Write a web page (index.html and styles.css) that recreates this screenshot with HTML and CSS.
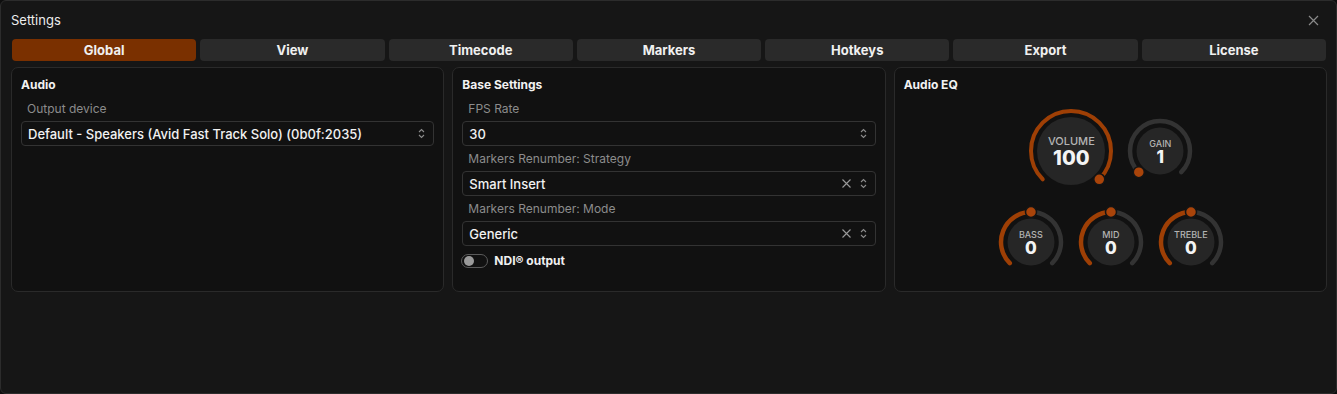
FILE: index.html
```html
<!DOCTYPE html>
<html lang="en">

<head>
    <meta charset="UTF-8">
    <meta name="viewport" content="width=device-width, initial-scale=1.0">
    <title>Settings</title>

    <link rel="stylesheet" href="styles.css">

</head>

<body>

    <div class="janela">
        <header class="topo">
            <span class="titulo">Settings</span>
            <svg class="fechar" width="11" height="11" viewBox="0 0 11 11">
                <path d="M1 1 L10 10 M10 1 L1 10" stroke="#8a8a8a" stroke-width="1.2" fill="none" />
            </svg>
        </header>

        <nav class="abas">
            <button class="aba ativa">Global</button>
            <button class="aba">View</button>
            <button class="aba">Timecode</button>
            <button class="aba">Markers</button>
            <button class="aba">Hotkeys</button>
            <button class="aba">Export</button>
            <button class="aba">License</button>
        </nav>

        <section class="paineis">
            <div class="painel">
                <h3>Audio</h3>
                <label class="rotulo">Output device</label>
                <div class="seletor">
                    <span>Default - Speakers (Avid Fast Track Solo) (0b0f:2035)</span>
                    <svg class="setas" width="7" height="11" viewBox="0 0 7 11">
                        <path d="M1 4 L3.5 1.5 L6 4 M1 7 L3.5 9.5 L6 7" stroke="#8c8c8c" stroke-width="1.1" fill="none" />
                    </svg>
                </div>
            </div>

            <div class="painel">
                <h3>Base Settings</h3>
                <label class="rotulo">FPS Rate</label>
                <div class="seletor">
                    <span>30</span>
                    <svg class="setas" width="7" height="11" viewBox="0 0 7 11">
                        <path d="M1 4 L3.5 1.5 L6 4 M1 7 L3.5 9.5 L6 7" stroke="#8c8c8c" stroke-width="1.1" fill="none" />
                    </svg>
                </div>
                <label class="rotulo">Markers Renumber: Strategy</label>
                <div class="seletor">
                    <span>Smart Insert</span>
                    <svg class="limpar" width="9" height="9" viewBox="0 0 9 9">
                        <path d="M0.5 0.5 L8.5 8.5 M8.5 0.5 L0.5 8.5" stroke="#9a9a9a" stroke-width="1.1" fill="none" />
                    </svg>
                    <svg class="setas" width="7" height="11" viewBox="0 0 7 11">
                        <path d="M1 4 L3.5 1.5 L6 4 M1 7 L3.5 9.5 L6 7" stroke="#8c8c8c" stroke-width="1.1" fill="none" />
                    </svg>
                </div>
                <label class="rotulo">Markers Renumber: Mode</label>
                <div class="seletor">
                    <span>Generic</span>
                    <svg class="limpar" width="9" height="9" viewBox="0 0 9 9">
                        <path d="M0.5 0.5 L8.5 8.5 M8.5 0.5 L0.5 8.5" stroke="#9a9a9a" stroke-width="1.1" fill="none" />
                    </svg>
                    <svg class="setas" width="7" height="11" viewBox="0 0 7 11">
                        <path d="M1 4 L3.5 1.5 L6 4 M1 7 L3.5 9.5 L6 7" stroke="#8c8c8c" stroke-width="1.1" fill="none" />
                    </svg>
                </div>
                <div class="chave">
                    <span class="trilho"><span class="bolinha"></span></span>
                    <span>NDI® output</span>
                </div>
            </div>

            <div class="painel">
                <h3>Audio EQ</h3>
                <div class="knobs">
                    <div class="linha">
                        <div class="knob grande">
                            <svg width="88" height="88" viewBox="0 0 88 88">
                                <path d="M15.72 72.28 A40 40 0 1 1 72.28 72.28" stroke="#9e3f05" stroke-width="4" fill="none" stroke-linecap="round" />
                                <circle cx="44" cy="44" r="34" fill="#262626" />
                                <circle cx="72.28" cy="72.28" r="5.5" fill="#a9440a" stroke="#141414" stroke-width="1.5" />
                            </svg>
                            <div class="valor">
                                <span class="nome">VOLUME</span>
                                <span class="num">100</span>
                            </div>
                        </div>
                        <div class="knob">
                            <svg width="68" height="68" viewBox="0 0 68 68">
                                <path d="M12.79 55.21 A30 30 0 1 1 55.21 55.21" stroke="#333333" stroke-width="4.5" fill="none" stroke-linecap="round" />
                                <circle cx="34" cy="34" r="23.5" fill="#262626" />
                                <circle cx="12.79" cy="55.21" r="5.5" fill="#a9440a" stroke="#141414" stroke-width="1.5" />
                            </svg>
                            <div class="valor">
                                <span class="nome">GAIN</span>
                                <span class="num">1</span>
                            </div>
                        </div>
                    </div>
                    <div class="linha baixo">
                        <div class="knob">
                            <svg width="68" height="68" viewBox="0 0 68 68">
                                <path d="M34 4 A30 30 0 0 1 55.21 55.21" stroke="#333333" stroke-width="4.5" fill="none" stroke-linecap="round" />
                                <path d="M12.79 55.21 A30 30 0 0 1 34 4" stroke="#9e3f05" stroke-width="4.5" fill="none" stroke-linecap="round" />
                                <circle cx="34" cy="34" r="23.5" fill="#262626" />
                                <circle cx="34" cy="4" r="5.5" fill="#a9440a" stroke="#141414" stroke-width="1.5" />
                            </svg>
                            <div class="valor">
                                <span class="nome">BASS</span>
                                <span class="num">0</span>
                            </div>
                        </div>
                        <div class="knob">
                            <svg width="68" height="68" viewBox="0 0 68 68">
                                <path d="M34 4 A30 30 0 0 1 55.21 55.21" stroke="#333333" stroke-width="4.5" fill="none" stroke-linecap="round" />
                                <path d="M12.79 55.21 A30 30 0 0 1 34 4" stroke="#9e3f05" stroke-width="4.5" fill="none" stroke-linecap="round" />
                                <circle cx="34" cy="34" r="23.5" fill="#262626" />
                                <circle cx="34" cy="4" r="5.5" fill="#a9440a" stroke="#141414" stroke-width="1.5" />
                            </svg>
                            <div class="valor">
                                <span class="nome">MID</span>
                                <span class="num">0</span>
                            </div>
                        </div>
                        <div class="knob">
                            <svg width="68" height="68" viewBox="0 0 68 68">
                                <path d="M34 4 A30 30 0 0 1 55.21 55.21" stroke="#333333" stroke-width="4.5" fill="none" stroke-linecap="round" />
                                <path d="M12.79 55.21 A30 30 0 0 1 34 4" stroke="#9e3f05" stroke-width="4.5" fill="none" stroke-linecap="round" />
                                <circle cx="34" cy="34" r="23.5" fill="#262626" />
                                <circle cx="34" cy="4" r="5.5" fill="#a9440a" stroke="#141414" stroke-width="1.5" />
                            </svg>
                            <div class="valor">
                                <span class="nome">TREBLE</span>
                                <span class="num">0</span>
                            </div>
                        </div>
                    </div>
                </div>
            </div>
        </section>
    </div>

</body>

</html>
```

FILE: styles.css
```css
* {
    box-sizing: border-box;
}

html,
body {
    margin: 0;
    height: 100%;
    background: #0e0e0e;
}

body {
    font-family: Inter, "Noto Sans", sans-serif;
    color: #f0f0f0;
}

.janela {
    height: 394px;
    width: 1337px;
    background: #161616;
    border: 1px solid #2c2c2c;
    border-radius: 6px;
    padding: 0 9px 0 10px;
}

.topo {
    height: 38px;
    display: flex;
    align-items: center;
    justify-content: space-between;
}

.titulo {
    font-size: 13px;
    color: #ececec;
}

.fechar {
    margin-right: 8px;
}

.abas {
    display: grid;
    grid-template-columns: repeat(7, 1fr);
    gap: 4px;
    padding: 0 1px;
}

.aba {
    height: 22px;
    border: none;
    border-radius: 4px;
    background: #2a2a2a;
    color: #f0f0f0;
    font-family: Inter, sans-serif;
    font-size: 13px;
    font-weight: 700;
    padding: 0;
}

.aba.ativa {
    background: #7a3000;
}

.paineis {
    display: grid;
    grid-template-columns: repeat(3, 1fr);
    gap: 8px;
    margin-top: 6px;
}

.painel {
    height: 225px;
    background: #111111;
    border: 1px solid #2a2a2a;
    border-radius: 7px;
    padding: 7px 9px 0 9px;
    display: flex;
    flex-direction: column;
}

.painel h3 {
    margin: 0 0 1px 0;
    font-size: 12px;
    font-weight: 700;
    line-height: 20px;
    color: #f2f2f2;
}

.rotulo {
    display: block;
    font-size: 12px;
    line-height: 16px;
    color: #8c8c8c;
    padding: 5px 0 4px 6px;
}

.seletor {
    height: 25px;
    border: 1px solid #333333;
    border-radius: 4px;
    display: flex;
    align-items: center;
    padding: 0 8px 0 6px;
    font-size: 13px;
    font-weight: 500;
    color: #f2f2f2;
}

.seletor span {
    flex: 1;
}

.limpar {
    margin-right: 9px;
}

.chave {
    display: flex;
    align-items: center;
    gap: 6px;
    margin-top: 7px;
    margin-left: -1px;
    font-size: 12px;
    font-weight: 700;
}

.trilho {
    width: 27px;
    height: 14px;
    border: 1px solid #5a5a5a;
    border-radius: 7px;
    display: flex;
    align-items: center;
    padding-left: 2px;
}

.bolinha {
    width: 10px;
    height: 10px;
    border-radius: 50%;
    background: #9a9a9a;
}

.knobs {
    display: flex;
    flex-direction: column;
    align-items: center;
    margin-top: 11px;
}

.linha {
    display: flex;
    align-items: center;
    gap: 11px;
    padding-left: 1px;
}

.linha.baixo {
    gap: 12px;
    margin-top: 13px;
}

.knob {
    position: relative;
    display: flex;
}

.knob svg {
    overflow: visible;
}

.valor {
    position: absolute;
    inset: 0;
    display: flex;
    flex-direction: column;
    align-items: center;
    justify-content: center;
    padding-top: 1px;
}

.nome {
    font-size: 9px;
    font-weight: 500;
    color: #b4b4b4;
    line-height: 11px;
}

.num {
    font-size: 17px;
    font-weight: 800;
    line-height: 17px;
    color: #f4f4f4;
}

.grande .nome {
    font-size: 11px;
    line-height: 13px;
}

.grande .num {
    font-size: 20px;
    line-height: 20px;
}
```
